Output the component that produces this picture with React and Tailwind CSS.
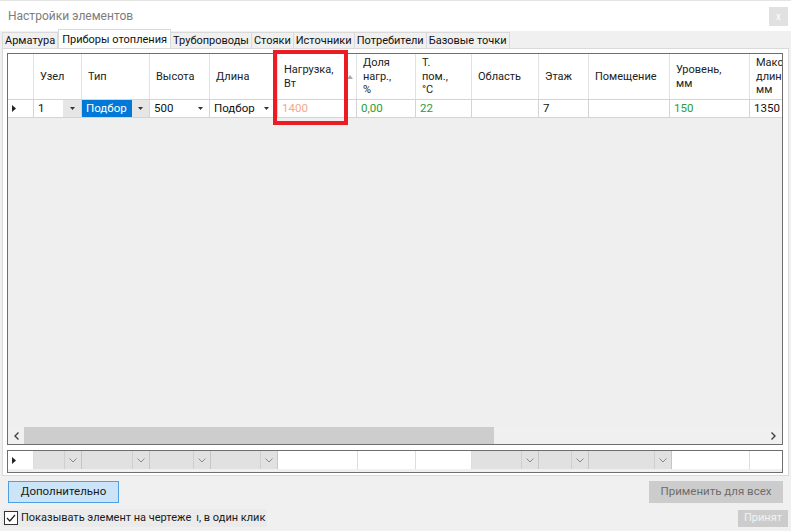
import React from 'react';

const font = { fontFamily: 'Roboto, "Liberation Sans", sans-serif' };

function Caret({ color = '#333' }) {
  return (
    <svg width="5" height="3" viewBox="0 0 5 3">
      <path d="M0 0H5L2.5 3Z" fill={color} />
    </svg>
  );
}

function Chevron() {
  return (
    <svg width="8" height="5" viewBox="0 0 8 5">
      <path d="M0.5 0.5L4 4L7.5 0.5" fill="none" stroke="#8a8a8a" strokeWidth="1" />
    </svg>
  );
}

function RowMark() {
  return (
    <svg width="4" height="7" viewBox="0 0 4 7">
      <path d="M0 0L4 3.5L0 7Z" fill="#222" />
    </svg>
  );
}

const headers = [
  { w: 'w-[26px]', lines: [] },
  { w: 'w-[48px]', lines: ['Узел'] },
  { w: 'w-[68px]', lines: ['Тип'] },
  { w: 'w-[60px]', lines: ['Высота'] },
  { w: 'w-[68px]', lines: ['Длина'] },
  { w: 'w-[79px]', lines: ['Нагрузка,', 'Вт'], sort: true },
  { w: 'w-[59px]', lines: ['Доля', 'нагр.,', '%'] },
  { w: 'w-[56px]', lines: ['Т.', 'пом.,', '°C'] },
  { w: 'w-[67px]', lines: ['Область'] },
  { w: 'w-[50px]', lines: ['Этаж'] },
  { w: 'w-[81px]', lines: ['Помещение'] },
  { w: 'w-[80px]', lines: ['Уровень,', 'мм'] },
  { w: 'w-[60px]', lines: ['Макс', 'длин', 'мм'] },
];

function ComboCell({ w, drop = 'w-[17px]' }) {
  return (
    <div className={`${w} h-full flex border-r border-[#c6c6c6] bg-[#e1e1e1] shrink-0`}>
      <div className="flex-1" />
      <div className={`${drop} border-l border-[#cfcfcf] flex items-center justify-center`}>
        <Chevron />
      </div>
    </div>
  );
}

function PlainCell({ w }) {
  return <div className={`${w} h-full border-r border-[#dcdcdc] bg-white shrink-0`} />;
}

export default function App() {
  return (
    <div className="w-[791px] h-[531px] bg-[#f0f0f0] flex flex-col overflow-hidden relative" style={font}>
      {/* title bar */}
      <div className="h-[31px] bg-white flex items-center justify-between pl-[8px] pr-[3px] border-t border-[#e4e4e4] shrink-0">
        <span className="text-[12px] text-[#7d7d7d] -mt-[1px]">Настройки элементов</span>
        <div className="w-[19px] h-[19px] bg-[#e1e1e1] text-white text-[10px] flex items-center justify-center">x</div>
      </div>

      {/* tabs */}
      <div className="h-[17px] flex items-end pl-[2px] text-[11px] text-[#111] shrink-0 leading-none">
        <div className="h-[16px] px-[2px] border border-b-0 border-[#dadada] bg-[#f0f0f0] flex items-center">Арматура</div>
        <div className="h-[19px] px-[3px] border border-b-0 border-[#dadada] bg-white flex items-center -mt-[2px]">Приборы отопления</div>
        <div className="h-[16px] px-[2px] border border-b-0 border-l-0 border-[#dadada] bg-[#f0f0f0] flex items-center">Трубопроводы</div>
        <div className="h-[16px] px-[2px] border border-b-0 border-l-0 border-[#dadada] bg-[#f0f0f0] flex items-center">Стояки</div>
        <div className="h-[16px] px-[2px] border border-b-0 border-l-0 border-[#dadada] bg-[#f0f0f0] flex items-center">Источники</div>
        <div className="h-[16px] px-[2px] border border-b-0 border-l-0 border-[#dadada] bg-[#f0f0f0] flex items-center">Потребители</div>
        <div className="h-[16px] px-[2px] border border-b-0 border-l-0 border-[#dadada] bg-[#f0f0f0] flex items-center">Базовые точки</div>
      </div>

      {/* tab page */}
      <div className="ml-[2px] mr-[2px] border border-[#dadada] bg-white pt-[4px] pl-[4px] pr-[5px] pb-[2px] flex flex-col gap-[5px] shrink-0">
        {/* main grid */}
        <div className="h-[392px] border border-[#6e6e6e] bg-[#efefef] flex flex-col overflow-hidden">
          <div className="h-[46px] flex bg-white border-b border-[#d4d4d4] shrink-0 text-[11px] leading-[13.5px] text-[#222]">
            {headers.map((h, i) => (
              <div key={i} className={`${h.w} h-full border-r border-[#e2e2e2] flex items-center pl-[6px] shrink-0 relative overflow-hidden whitespace-nowrap`}>
                <div className="flex flex-col">
                  {h.lines.map((l) => (
                    <span key={l}>{l}</span>
                  ))}
                </div>
                {h.sort && (
                  <svg className="absolute right-[3px] top-[21px]" width="6" height="4" viewBox="0 0 6 4">
                    <path d="M0 4L3 0L6 4Z" fill="#aaaaaa" />
                  </svg>
                )}
              </div>
            ))}
          </div>

          <div className="h-[18px] flex bg-white border-b border-[#d4d4d4] shrink-0 text-[11.5px] leading-none text-[#111]">
            <div className="w-[26px] h-full border-r border-[#d4d4d4] flex items-center pl-[4px] shrink-0">
              <RowMark />
            </div>
            <div className="w-[48px] h-full border-r border-[#d4d4d4] flex shrink-0">
              <span className="flex-1 flex items-center pl-[4px]">1</span>
              <span className="w-[18px] bg-[#e6e6e6] flex items-center justify-center"><Caret /></span>
            </div>
            <div className="w-[68px] h-full border-r border-[#d4d4d4] flex shrink-0">
              <span className="flex-1 bg-[#0078d7] text-white flex items-center pl-[4px]">Подбор</span>
              <span className="w-[17px] bg-[#e6e6e6] flex items-center justify-center"><Caret /></span>
            </div>
            <div className="w-[60px] h-full border-r border-[#d4d4d4] flex shrink-0">
              <span className="flex-1 flex items-center pl-[4px]">500</span>
              <span className="w-[17px] flex items-center justify-center"><Caret /></span>
            </div>
            <div className="w-[68px] h-full border-r border-[#d4d4d4] flex shrink-0">
              <span className="flex-1 flex items-center pl-[4px]">Подбор</span>
              <span className="w-[17px] flex items-center justify-center pr-[4px]"><Caret /></span>
            </div>
            <div className="w-[79px] h-full border-r border-[#d4d4d4] flex items-center pl-[4px] text-[#f5a88a] shrink-0">1400</div>
            <div className="w-[59px] h-full border-r border-[#d4d4d4] flex items-center pl-[4px] text-[#2e9b2e] shrink-0">0,00</div>
            <div className="w-[56px] h-full border-r border-[#d4d4d4] flex items-center pl-[4px] text-[#2e9b2e] shrink-0">22</div>
            <div className="w-[67px] h-full border-r border-[#d4d4d4] shrink-0" />
            <div className="w-[50px] h-full border-r border-[#d4d4d4] flex items-center pl-[4px] shrink-0">7</div>
            <div className="w-[81px] h-full border-r border-[#d4d4d4] shrink-0" />
            <div className="w-[80px] h-full border-r border-[#d4d4d4] flex items-center pl-[4px] text-[#2e9b2e] shrink-0">150</div>
            <div className="w-[60px] h-full flex items-center pl-[4px] shrink-0">1350</div>
          </div>

          <div className="flex-1" />

          {/* horizontal scrollbar */}
          <div className="h-[17px] flex bg-[#f0f0f0] shrink-0 text-[#606060]">
            <div className="w-[16px] flex items-center justify-center">
              <svg width="5" height="8" viewBox="0 0 5 8">
                <path d="M4.5 0.5L1 4L4.5 7.5" fill="none" stroke="#404040" strokeWidth="1.4" />
              </svg>
            </div>
            <div className="w-[470px] bg-[#cdcdcd]" />
            <div className="flex-1" />
            <div className="w-[17px] flex items-center justify-center">
              <svg width="5" height="8" viewBox="0 0 5 8">
                <path d="M0.5 0.5L4 4L0.5 7.5" fill="none" stroke="#404040" strokeWidth="1.4" />
              </svg>
            </div>
          </div>
        </div>

        {/* filter grid */}
        <div className="h-[23px] border border-[#6e6e6e] bg-[#f0f0f0] flex flex-col overflow-hidden">
          <div className="h-[18px] flex">
            <div className="w-[26px] h-full bg-white border-r border-[#dcdcdc] flex items-center pl-[4px] shrink-0">
              <RowMark />
            </div>
            <ComboCell w="w-[48px]" />
            <ComboCell w="w-[68px]" />
            <ComboCell w="w-[61px]" />
            <ComboCell w="w-[67px]" />
            <PlainCell w="w-[80px]" />
            <PlainCell w="w-[58px]" />
            <PlainCell w="w-[56px]" />
            <ComboCell w="w-[67px]" />
            <ComboCell w="w-[50px]" />
            <ComboCell w="w-[83px]" />
            <PlainCell w="w-[78px]" />
            <div className="flex-1 bg-white" />
          </div>
        </div>
      </div>

      {/* buttons */}
      <div className="mt-[5px] h-[22px] flex justify-between pl-[8px] pr-[8px] text-[11.5px] shrink-0">
        <div className="w-[111px] h-full bg-[#cce4f7] border border-[#4d9fe6] flex items-center justify-center text-[#1a1a1a]">
          Дополнительно
        </div>
        <div className="w-[134px] h-full bg-[#cccccc] flex items-center justify-center text-[#6d6d6d]">
          Применить для всех
        </div>
      </div>

      <div className="mt-[6px] h-[18px] flex justify-between items-stretch pl-[2px] pr-[3px] text-[11px] shrink-0">
        <div className="w-[265px] bg-[#ebebeb] flex items-center gap-[3px] pl-[2px] text-[#1a1a1a] whitespace-nowrap">
          <div className="w-[14px] h-[14px] border border-[#333] bg-white flex items-center justify-center">
            <svg width="10" height="8" viewBox="0 0 10 8">
              <path d="M1 4L3.8 7L9 1" fill="none" stroke="#222" strokeWidth="1.2" />
            </svg>
          </div>
          <span>Показывать элемент на чертеже</span>
          <span className="ml-[2px]">ı, в один клик</span>
        </div>
        <div className="w-[50px] bg-[#cccccc] flex items-center justify-center text-[#f3f3f3] mt-[1px]">Принят</div>
      </div>

      {/* annotation frame */}
      <div className="absolute left-[273px] top-[50px] w-[75px] h-[75px] border-[4px] border-[#ec1c24]" />
    </div>
  );
}
